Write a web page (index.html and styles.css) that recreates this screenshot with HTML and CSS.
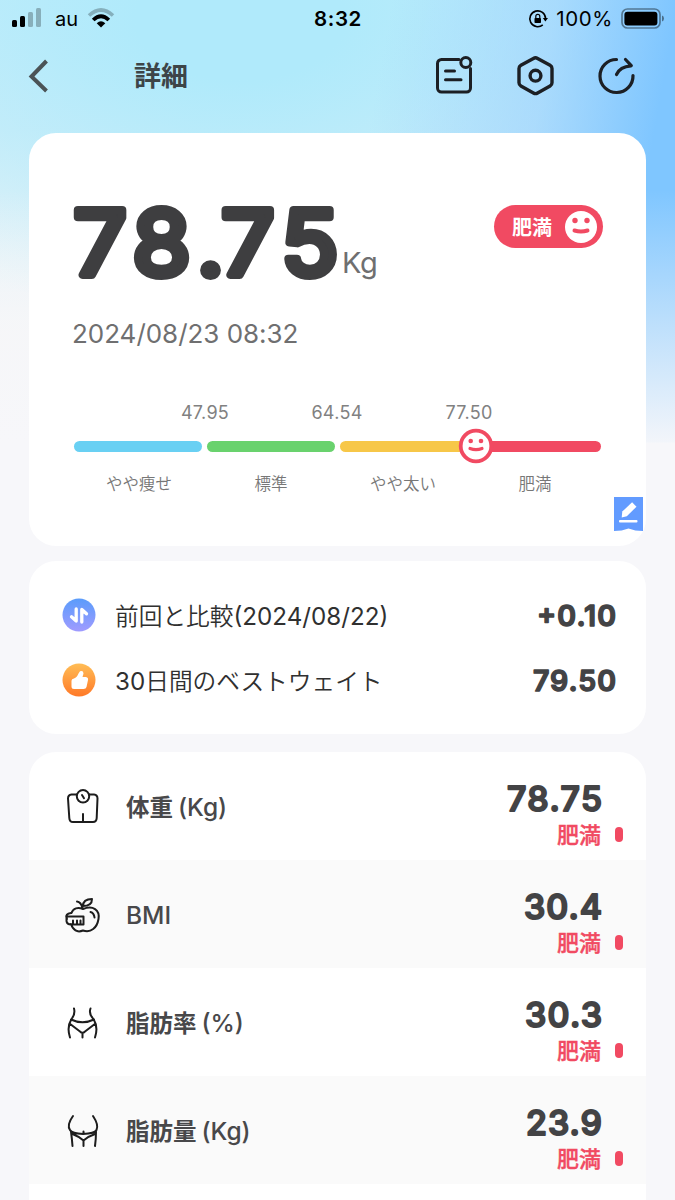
FILE: index.html
```
<!DOCTYPE html>
<html lang="ja">
<head>
<meta charset="utf-8">
<title>詳細</title>
<link rel="stylesheet" href="styles.css">
</head>
<body>
<div class="screen">
  <div class="status">
    <div class="carrier">
      <svg width="32" height="20" viewBox="0 0 32 20"><rect x="1" y="12" width="5" height="7" rx="1.5"/><rect x="9" y="8" width="5" height="11" rx="1.5"/><g opacity=".25"><rect x="17" y="4" width="5" height="15" rx="1.5"/><rect x="25" y="0" width="5" height="19" rx="1.5"/></g></svg>
      <span class="au">au</span>
      <svg class="wifi" width="28" height="20" viewBox="0 0 28 20" fill="none" stroke="#000"><path d="M2 7.500Q14-3.500 26 7.500" stroke-width="3.6" opacity=".25"/><path d="M6.200 12Q14 4.500 21.800 12" stroke-width="3.8"/><path d="M9.700 15.300Q14 11.200 18.300 15.300L14 19.500Z" fill="#000" stroke="none"/></svg>
    </div>
    <div class="clock">8:32</div>
    <div class="power">
      <svg width="20" height="20" viewBox="0 0 20 20" fill="none" stroke="#000" stroke-width="1.6"><path d="M14.800 15.800A7.900 7.900 0 1 1 17.600 9.500"/><path d="M14.800 9H20L17.400 12.600Z" fill="#000" stroke="none"/><rect x="6.500" y="9" width="6.500" height="5" rx=".8" fill="#000" stroke="none"/><path d="M7.800 9V7.400a2 2 0 0 1 4 0V9" stroke-width="1.2"/></svg>
      <span>100%</span>
      <svg width="44" height="22" viewBox="0 0 44 22"><rect x="1" y="1" width="38" height="19" rx="5.500" fill="none" stroke="#000" stroke-opacity=".42" stroke-width="1.700"/><rect x="3.400" y="3.700" width="33" height="13.700" rx="3"/><path d="M41 7.500q2 .7 2 3t-2 3z" opacity=".45"/></svg>
    </div>
  </div>
  <div class="nav">
    <svg class="back" width="22" height="34" viewBox="0 0 22 34" fill="none" stroke="#4b5356" stroke-width="4"><path d="M19.500 2L4.500 17.500 19.500 32"/></svg>
    <h1>詳細</h1>
    <div class="tools">
      <svg width="40" height="42" viewBox="0 0 40 42" fill="none" stroke="#1c1f24" stroke-width="3" stroke-linecap="round"><path d="M25 4.500H7.500a4 4 0 0 0-4 4v24.500a4 4 0 0 0 4 4h25a4 4 0 0 0 4-4V13.500M11.500 16h9M11.500 24.800h15.500"/><circle cx="31.800" cy="7.500" r="5"/></svg>
      <svg width="40" height="42" viewBox="0 0 40 42" fill="none" stroke="#1c1f24" stroke-width="3.4" stroke-linejoin="round"><path d="M18.400 3.400Q20.500 2.200 22.600 3.400L35.100 10.300Q37 11.400 37 13.500V27.800Q37 29.900 35.100 31L22.600 38Q20.500 39.200 18.400 38L5.900 31Q4 29.900 4 27.800V13.500Q4 11.400 5.900 10.300Z"/><circle cx="20.500" cy="20.700" r="5.400"/></svg>
      <svg width="40" height="42" viewBox="0 0 40 42" fill="none" stroke="#1c1f24" stroke-width="3.2" stroke-linecap="round" stroke-linejoin="round"><path d="M20.500 4.500A16.500 16.500 0 1 0 37 20.500M20.500 19.500Q24 11.500 35 10.800M29.500 4.500L35.300 10.600"/></svg>
    </div>
  </div>

  <section class="card summary">
    <div class="top">
      <div class="weight">
        <svg class="round" width="270" height="100" viewBox="0 0 270 100"><text class="big" y="77.500" x="-.5 55.500 116.500 139.500 196.500" transform="scale(1.055 1)">78.75</text></svg>
        <span class="unit">Kg</span>
      </div>
      <div class="pill"><span>肥満</span><svg width="32" height="32" viewBox="0 0 32 32"><circle cx="16" cy="16" r="16" fill="#fff"/><g fill="#f14a62"><circle cx="10" cy="9.500" r="2.7"/><circle cx="22" cy="9.500" r="2.7"/></g><path d="M9.500 19.500Q16 21.500 22.500 19.500" fill="none" stroke="#f14a62" stroke-width="4" stroke-linecap="round"/></svg></div>
    </div>
    <div class="date">2024/08/23 08:32</div>
    <div class="limits"><span>47.95</span><span>64.54</span><span>77.50</span></div>
    <div class="scale">
      <i class="thin"></i><i class="normal"></i><i class="over"></i><i class="obese"></i>
      <svg class="marker" width="36" height="36" viewBox="0 0 36 36"><circle cx="18" cy="18" r="15.300" fill="#fff" stroke="#f14a62" stroke-width="3.8"/><g fill="#f14a62"><circle cx="12.700" cy="13" r="2.3"/><circle cx="23" cy="13" r="2.3"/></g><path d="M12 20.500Q18 22.800 24 20.500" fill="none" stroke="#f14a62" stroke-width="3.2" stroke-linecap="round"/></svg>
    </div>
    <div class="names"><span>やや痩せ</span><span>標準</span><span>やや太い</span><span>肥満</span></div>
    <svg class="note" width="29" height="35" viewBox="0 0 29 35"><path d="M0 0H29V34Q21 34 14.500 31.500Q8 34 0 34Z" fill="#629bff"/><path d="M7.700 20.500L8.300 14.600 18.100 5.200 22.500 9.700 12.800 19.300Z" fill="#fff"/><rect x="5" y="23" width="18.500" height="2.500" rx="1" fill="#fff"/></svg>
  </section>

  <section class="card compare">
    <div class="line">
      <svg width="34" height="34" viewBox="0 0 34 34"><defs><linearGradient id="blue" x2="0" y2="1"><stop stop-color="#5a9cfb"/><stop offset="1" stop-color="#a09bff"/></linearGradient></defs><circle cx="17" cy="17" r="16.500" fill="url(#blue)"/><path d="M14.200 11V23L9.500 18.800M19.800 24V11.500L24.500 15.800" fill="none" stroke="#fff" stroke-width="3.3" stroke-linejoin="round" stroke-linecap="round"/></svg>
      <span class="label">前回と比較<b>(2024/08/22)</b></span>
      <svg class="round" width="100" height="44" viewBox="0 0 100 44"><text class="mid" x="99" y="32.500" text-anchor="end" textLength="79">+0.10</text></svg>
    </div>
    <div class="line">
      <svg width="34" height="34" viewBox="0 0 34 34"><defs><linearGradient id="orange" x2="0" y2="1"><stop stop-color="#ffbd55"/><stop offset="1" stop-color="#ff7928"/></linearGradient></defs><circle cx="17" cy="17" r="16.500" fill="url(#orange)"/><path d="M9.500 17.800Q9.500 15.800 12 15.500Q15 14.500 16.500 10.500L18 8.300Q21.300 7.300 21.500 10.500L20.500 14H24Q26.500 14.500 26 17L24.500 24Q24 26 21.500 26H12Q9.500 26 9.500 23.500Z" fill="#fff"/></svg>
      <span class="label"><b>30</b>日間のベストウェイト</span>
      <svg class="round" width="100" height="44" viewBox="0 0 100 44"><text class="mid" x="99" y="32.500" text-anchor="end" textLength="83">79.50</text></svg>
    </div>
  </section>

  <section class="card metrics">
    <div class="row">
      <svg class="icon" width="36" height="36" viewBox="0 0 36 36"><path d="M11.500 5.500H6.500Q3 6 3 9.500L4.300 29Q4.500 33 8 33H28Q31.500 33 31.700 29L32.500 9.500Q32.500 6 29 5.500H24M18 25V32"/><circle cx="18" cy="7.300" r="6.200"/><path d="M17 6L19 9.200"/></svg>
      <span class="name">体重<em>(Kg)</em></span>
      <div class="value"><svg class="round" width="120" height="48" viewBox="0 0 120 48"><text class="num" x="120" y="35" text-anchor="end" textLength="95">78.75</text></svg><span>肥満</span></div><i class="dot"></i>
    </div>
    <div class="row">
      <svg class="icon" width="36" height="36" viewBox="0 0 36 36"><path d="M6.500 16C8 11 13 10 18 12C28 8 35 13 33.500 22C32 31 26 36 18 33.500C12 36 8 33 6 27M6 16Q0 17 1.500 21V24Q2 27.500 6 27.500H18.500V19.500H4Q1 19 2 22M8 27V23.500M12 27V23.500M15.500 27V23.500M17.500 11Q16 5 12 4.500M18 9Q18 2 27 2Q27 9 18 9M25.500 15Q29 16 29.500 20.500"/></svg>
      <span class="name bmi">BMI</span>
      <div class="value"><svg class="round" width="120" height="48" viewBox="0 0 120 48"><text class="num" x="120" y="35" text-anchor="end" textLength="78">30.4</text></svg><span>肥満</span></div><i class="dot"></i>
    </div>
    <div class="row">
      <svg class="icon" width="36" height="36" viewBox="0 0 36 36"><path d="M9 3.500Q10.500 9 6.500 14Q1.500 22 5 32.500M25.500 3.500Q23.500 9 28.500 14Q33.500 22 30 32.500M6 14.500Q17.500 20 29 14.500M4.500 18.500L15 26.500Q17.500 29 20 26.500L30.500 18.500M17.500 28V32.500"/></svg>
      <span class="name">脂肪率<em>(%)</em></span>
      <div class="value"><svg class="round" width="120" height="48" viewBox="0 0 120 48"><text class="num" x="120" y="35" text-anchor="end" textLength="77">30.3</text></svg><span>肥満</span></div><i class="dot"></i>
    </div>
    <div class="row">
      <svg class="icon" width="36" height="36" viewBox="0 0 36 36"><path d="M8 3Q1.500 12 5 17Q6.500 20.500 18 21Q30 20.500 31.500 17Q34 12 28 3M6 18.500Q7 26 7.500 33M31 18.500Q31 26 30 33M7.500 21Q13 23 18.500 27.500Q24 23 30 21M18.500 18.500V21M18.500 27V33"/></svg>
      <span class="name">脂肪量<em>(Kg)</em></span>
      <div class="value"><svg class="round" width="120" height="48" viewBox="0 0 120 48"><text class="num" x="120" y="35" text-anchor="end" textLength="76">23.9</text></svg><span>肥満</span></div><i class="dot"></i>
    </div>
    <div class="row"></div>
  </section>
</div>
</body>
</html>
```
FILE: styles.css
```
* { box-sizing: border-box; }
body { margin: 0; font-family: Inter, "Noto Sans CJK JP", sans-serif; color: #434345; }
svg { display: block; flex: none; overflow: visible; }
.screen {
  height: 1200px; overflow: hidden;
  background:
    linear-gradient(180deg, rgba(247,247,250,0) 190px, rgba(245,246,249,.55) 330px, rgba(247,247,250,.96) 442px, #f7f7fa 443px),
    linear-gradient(100deg, rgba(150,205,255,0) 52%, rgba(150,205,255,.55) 74%, #7fc6ff 90%) 0 0 / 675px 443px no-repeat,
    radial-gradient(ellipse 520px 300px at 240px 20px, #b0eafb 20%, rgba(176,234,251,.6) 50%, rgba(210,236,248,0) 100%),
    linear-gradient(180deg, #c9eefa 0, #d3eef8 130px, #f7f7f8 330px);
}
.status { height: 37px; display: grid; grid-template-columns: 1fr 60px 1fr; align-items: center; padding: 0 10px 0 11px; color: #000; }
.carrier { display: flex; align-items: center; margin-top: -2px; }
.au { font-size: 20px; margin: 3px 9px 0 12px; }
.clock { font-size: 20.500px; font-weight: 600; letter-spacing: .6px; text-align: center; }
.power { display: flex; align-items: center; justify-content: flex-end; font-size: 20.500px; }
.power span { margin: 0 8px 0 8px; letter-spacing: .6px; }
.nav { height: 96px; display: flex; align-items: flex-start; padding: 18px 39px 0 27px; }
.back { margin-top: 4px; }
h1 { font-size: 27px; line-height: 40px; font-weight: 700; color: #3d4548; margin: 2px 0 0 85px; }
.tools { display: flex; gap: 41px; margin-left: auto; }

.card { position: relative; width: 617px; margin-left: 29px; background: #fff; border-radius: 27px; }
.summary { height: 413px; padding: 64px 43px 0 45px; }
.top { display: flex; justify-content: space-between; height: 90px; }
.weight { display: flex; }
.round text { font-family: Inter, sans-serif; fill: #434345; stroke: #434345; stroke-linejoin: round; }
.round .big { font-size: 89px; font-weight: 400; stroke-width: 8px; fill: #3e3e40; stroke: #3e3e40; }
.unit { font-size: 29px; line-height: 36px; color: #6f6f70; margin: 48px 0 0 -2px; letter-spacing: -.3px; }
.pill { width: 109px; height: 43px; margin-top: 8px; border-radius: 22px; background: #f14a62; color: #fff; display: flex; align-items: center; justify-content: space-between; padding: 0 6px 0 18px; font-size: 20px; font-weight: 600; }
.date { font-size: 26px; line-height: 36px; letter-spacing: -.03px; color: #6f6f70; margin-top: 29px; margin-left: -2px; }
.limits { display: flex; justify-content: center; gap: 60px; margin: 48px 0 0 -3px; font-size: 18px; line-height: 26px; color: #818181; letter-spacing: .3px; }
.limits span { width: 72px; text-align: center; }
.scale { position: relative; display: grid; grid-template-columns: repeat(4, 128px); gap: 5px; height: 11px; margin-top: 15px; }
.scale i { border-radius: 6px; }
.thin { background: #69d0f3; }
.normal { background: #69d26d; }
.over { background: #f7c748; }
.obese { background: #f14a62; }
.marker { position: absolute; left: 384px; top: -13px; }
.names { display: grid; grid-template-columns: repeat(4, 132px); margin: 20px 0 0 -1px; text-align: center; font-size: 16.500px; line-height: 25px; color: #777; font-weight: 350; }
.note { position: absolute; right: 3px; top: 364px; }

.compare { height: 173px; margin-top: 15px; padding: 21px 29px 0 33px; }
.line { height: 65px; display: flex; align-items: center; }
.label { flex: 1; margin-left: 19px; font-size: 23.700px; color: #303030; font-weight: 350; }
.label b { font-weight: 400; font-size: 24.200px; }
.round .mid { font-size: 28.500px; font-weight: 600; stroke-width: 1.400px; }

.metrics { margin-top: 18px; overflow: hidden; }
.row { height: 108px; display: flex; align-items: flex-start; padding: 0 23px 0 36px; }
.row:nth-child(even) { background: #fafafa; }
.icon { margin-top: 37px; fill: none; stroke: #1d1d1d; stroke-width: 2; stroke-linecap: round; stroke-linejoin: round; }
.name { flex: 1; margin: 37px 0 0 25px; font-size: 23.500px; line-height: 36px; font-weight: 600; color: #48484a; }
.name em { font-style: normal; font-weight: 500; font-size: 24.500px; margin-left: 5px; }
.bmi { font-weight: 500; font-size: 24.500px; }
.value { width: 120px; margin-top: 24px; text-align: right; }
.value span { display: block; font-size: 22px; line-height: 30px; font-weight: 500; -webkit-text-stroke: .4px #f14a62; color: #f14a62; margin: -4px 1px 0 0; }
.round .num { font-size: 34px; font-weight: 500; stroke-width: 2px; }
.dot { width: 8px; height: 15px; border-radius: 4px; background: #f14a62; margin: 75px 0 0 13px; }
```
